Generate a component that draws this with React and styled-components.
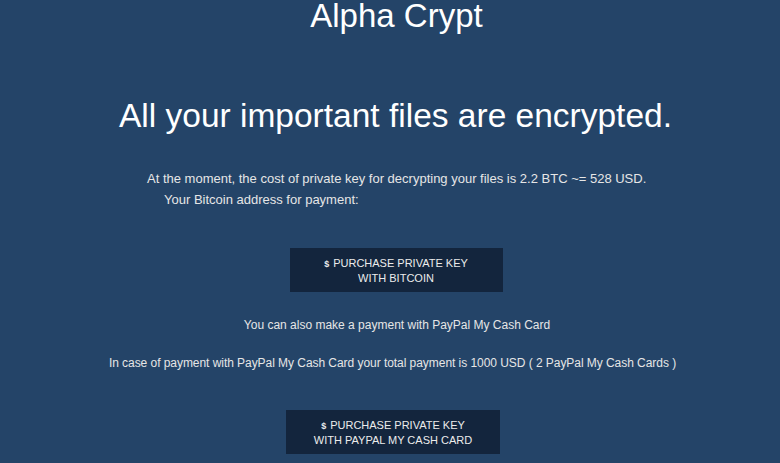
import React from "react";
import styled, { createGlobalStyle } from "styled-components";

const Global = createGlobalStyle`
  html, body { margin: 0; padding: 0; background: #244468; }
  body { font-family: "Liberation Sans", Arial, sans-serif; }
`;

const Page = styled.div`
  width: 780px;
  height: 463px;
  overflow: hidden;
  background: #244468;
  color: #ffffff;
  display: flex;
  flex-direction: column;
  align-items: center;
`;

const Title = styled.h1`
  margin: 0 0 0 13px;
  font-weight: normal;
  font-size: 33px;
  line-height: 32px;
  color: #ffffff;
`;

const Headline = styled.h2`
  margin: 66px 0 0 11px;
  font-weight: normal;
  font-size: 33.5px;
  line-height: 36px;
  color: #ffffff;
`;

const Info = styled.div`
  margin-top: 34px;
  font-size: 13px;
  line-height: 21px;
  color: #e6e6e6;
  align-self: flex-start;
  padding-left: 147px;
`;

const Indented = styled.div`
  padding-left: 17px;
`;

const Button = styled.button`
  margin-top: ${(p) => p.$top}px;
  margin-left: ${(p) => p.$shift}px;
  width: ${(p) => p.$w}px;
  height: 44px;
  border: none;
  background: #13253d;
  color: #ececec;
  font-family: "Liberation Sans", Arial, sans-serif;
  font-size: 11px;
  line-height: 14px;
  text-transform: uppercase;
  padding: 0;
  cursor: pointer;
`;

const Dollar = styled.span`
  font-weight: bold;
  font-size: 9px;
  margin-right: 4px;
`;

const Note = styled.p`
  margin: ${(p) => p.$top}px 0 0;
  font-size: 12px;
  line-height: 14px;
  color: #e6e6e6;
  letter-spacing: ${(p) => p.$ls || 0}px;
  margin-left: ${(p) => p.$shift}px;
`;

export default function App() {
  return (
    <Page>
      <Global />
      <Title>Alpha Crypt</Title>
      <Headline>All your important files are encrypted.</Headline>
      <Info>
        At the moment, the cost of private key for decrypting your files is 2.2 BTC ~= 528 USD.
        <Indented>Your Bitcoin address for payment:</Indented>
      </Info>
      <Button $top={38} $shift={12} $w={213}>
        <Dollar>$</Dollar>Purchase private key
        <br />
        with Bitcoin
      </Button>
      <Note $top={26} $shift={14}>You can also make a payment with PayPal My Cash Card</Note>
      <Note $top={24} $shift={5} $ls={-0.05}>
        In case of payment with PayPal My Cash Card your total payment is 1000 USD ( 2 PayPal My Cash Cards )
      </Note>
      <Button $top={40} $shift={6} $w={214}>
        <Dollar>$</Dollar>Purchase private key
        <br />
        with PayPal My Cash Card
      </Button>
    </Page>
  );
}
